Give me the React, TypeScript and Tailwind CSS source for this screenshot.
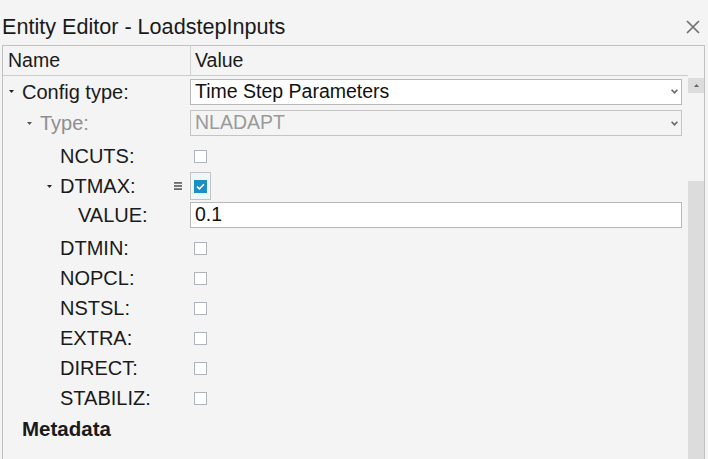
import React from "react";

const FONT = "font-['Liberation_Sans',Arial,sans-serif]";

function Caret({ muted }: { muted?: boolean }) {
  return (
    <svg width="5" height="3" viewBox="0 0 5 3" className="block">
      <path d="M0 0 H5 L2.5 3 Z" fill={muted ? "#555" : "#222"} />
    </svg>
  );
}

function SelectChevron() {
  return (
    <svg width="7" height="5" viewBox="0 0 7 5" className="block">
      <path d="M0.6 0.8 L3.5 3.8 L6.4 0.8" fill="none" stroke="#666" strokeWidth="1.6" />
    </svg>
  );
}

function CheckBox({ checked }: { checked?: boolean }) {
  if (checked) {
    return (
      <div className="w-[13px] h-[13px] bg-[#1b8fc5] flex items-center justify-center">
        <svg width="9" height="7" viewBox="0 0 9 7">
          <path d="M1 3.6 L3.4 5.8 L8 1.2" fill="none" stroke="#fff" strokeWidth="1.6" />
        </svg>
      </div>
    );
  }
  return <div className="w-[13px] h-[13px] bg-white border border-[#aeb3bc]" />;
}

type NameProps = {
  label: string;
  indent: number;
  caret?: boolean;
  muted?: boolean;
  bold?: boolean;
  menu?: boolean;
};

function NameCell({ label, indent, caret, muted, bold, menu }: NameProps) {
  return (
    <div className="relative w-[187px] h-full flex items-center" style={{ paddingLeft: indent }}>
      <div className="w-[18px] flex justify-end pr-[8px]">{caret ? <Caret muted={muted} /> : null}</div>
      <span
        className={`leading-none whitespace-nowrap ${muted ? "text-[#8e8e8e]" : "text-[#1a1a1a]"} ${
          bold ? "font-bold text-[20.5px]" : "text-[20px]"
        }`}
      >
        {label}
      </span>
      {menu ? (
        <svg width="8" height="8" viewBox="0 0 8 8" className="absolute right-[8px] top-1/2 -translate-y-1/2">
          <rect x="0" y="0" width="8" height="1.8" fill="#6b6b6b" />
          <rect x="0" y="3.1" width="8" height="1.8" fill="#6b6b6b" />
          <rect x="0" y="6.2" width="8" height="1.8" fill="#6b6b6b" />
        </svg>
      ) : null}
    </div>
  );
}

const checkRows = ["DTMIN:", "NOPCL:", "NSTSL:", "EXTRA:", "DIRECT:", "STABILIZ:"];

export default function App() {
  return (
    <div className={`w-[708px] h-[459px] bg-[#f4f4f4] overflow-hidden ${FONT}`}>
      {/* Title bar */}
      <div className="h-[45px] flex items-center justify-between pl-[2px] pr-[8px] pt-[9px]">
        <span className="text-[21.6px] leading-none text-[#1a1a1a] whitespace-nowrap">
          Entity Editor - LoadstepInputs
        </span>
        <svg width="14" height="14" viewBox="0 0 14 14" className="block">
          <path d="M1 1 L13 13 M13 1 L1 13" stroke="#707070" strokeWidth="1.7" />
        </svg>
      </div>

      {/* Property grid */}
      <div className="ml-[2px] w-[703px] h-[414px] border-t border-l border-r border-[#c2c2c2] flex">
        <div className="w-[685px] flex flex-col">
          {/* Header */}
          <div className="h-[30px] border-b border-[#cbcbcb] flex shrink-0">
            <div className="w-[188px] border-r border-[#d2d2d2] pl-[5px] flex items-center">
              <span className="text-[19.5px] leading-none text-[#1a1a1a]">Name</span>
            </div>
            <div className="flex-1 pl-[4px] flex items-center">
              <span className="text-[19.5px] leading-none text-[#1a1a1a]">Value</span>
            </div>
          </div>

          {/* Config type */}
          <div className="h-[31px] flex items-center shrink-0">
            <NameCell label="Config type:" indent={1} caret />
            <div className="flex-1 pr-[6px]">
              <div className="h-[26px] bg-white border border-[#b8b8b8] flex items-center justify-between pl-[4px] pr-[3px]">
                <span className="text-[19.5px] leading-none text-[#111]">Time Step Parameters</span>
                <SelectChevron />
              </div>
            </div>
          </div>

          {/* Type */}
          <div className="h-[32px] flex items-center shrink-0">
            <NameCell label="Type:" indent={19} caret muted />
            <div className="flex-1 pr-[6px]">
              <div className="h-[26px] bg-[#f4f4f4] border border-[#c4c4c4] flex items-center justify-between pl-[4px] pr-[3px]">
                <span className="text-[19.5px] leading-none text-[#9a9a9a]">NLADAPT</span>
                <SelectChevron />
              </div>
            </div>
          </div>

          {/* NCUTS */}
          <div className="h-[33px] flex items-center shrink-0">
            <NameCell label="NCUTS:" indent={39} />
            <div className="flex-1 pl-[4px] pt-[1px]">
              <CheckBox />
            </div>
          </div>

          {/* DTMAX */}
          <div className="h-[28px] flex items-center shrink-0">
            <NameCell label="DTMAX:" indent={39} caret menu />
            <div className="flex-1 h-full">
              <div className="w-[21px] h-full border border-[#c3c3c3] bg-[#eef8fc] flex items-center justify-center">
                <CheckBox checked />
              </div>
            </div>
          </div>

          {/* VALUE */}
          <div className="h-[33px] flex items-start shrink-0">
            <div className="h-[30px]">
              <NameCell label="VALUE:" indent={57} />
            </div>
            <div className="flex-1 pr-[6px] pt-[2px]">
              <div className="h-[26px] bg-white border border-[#b8b8b8] flex items-center pl-[4px]">
                <span className="text-[19.5px] leading-none text-[#111]">0.1</span>
              </div>
            </div>
          </div>

          {checkRows.map((label) => (
            <div key={label} className="h-[30px] flex items-center shrink-0">
              <NameCell label={label} indent={39} />
              <div className="flex-1 pl-[4px]">
                <CheckBox />
              </div>
            </div>
          ))}

          {/* Metadata group */}
          <div className="h-[32px] flex items-center shrink-0">
            <NameCell label="Metadata" indent={1} bold />
          </div>
        </div>

        {/* Vertical scrollbar */}
        <div className="w-[16px] flex flex-col pt-[32px]">
          <div className="h-[15px] bg-[#dcdcdc] flex items-center justify-center shrink-0">
            <svg width="5" height="3" viewBox="0 0 5 3" className="block">
              <path d="M0 3 H5 L2.5 0 Z" fill="#666" />
            </svg>
          </div>
          <div className="h-[88px] shrink-0" />
          <div className="flex-1 bg-[#dcdcdc]" />
        </div>
      </div>
    </div>
  );
}
